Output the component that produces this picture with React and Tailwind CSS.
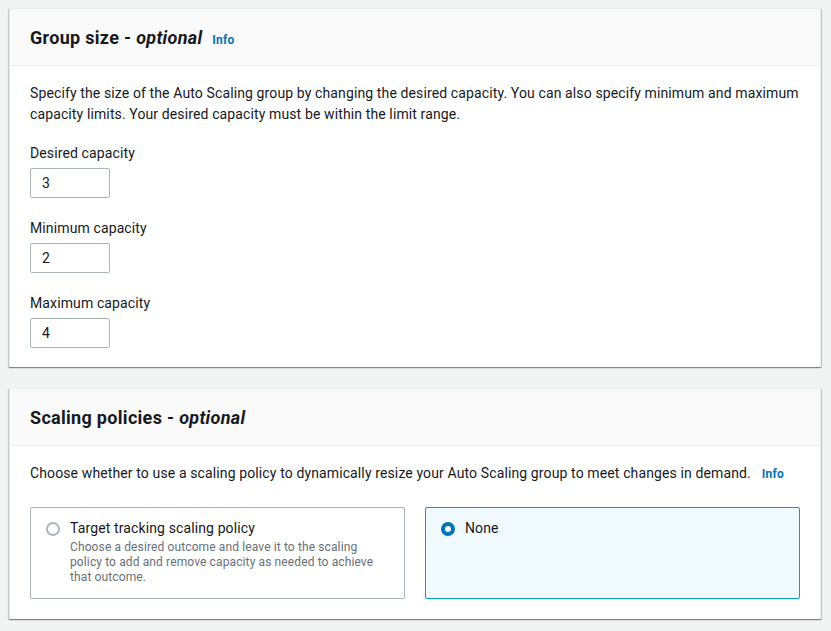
import React from 'react';

const font = { fontFamily: 'Roboto, "Liberation Sans", sans-serif' };

// Small blue "Info" link used next to headings
const Info = () => (
  <span className="text-[12px] font-bold text-[#0073bb] leading-none tracking-[0.2px]">Info</span>
);

const Card = ({ title, info, children }) => (
  <div className="bg-white border-t border-x border-[#eaeded] shadow-[0_1px_1px_0_rgba(0,28,36,0.3),1px_1px_1px_0_rgba(0,28,36,0.15),-1px_1px_1px_0_rgba(0,28,36,0.15)]">
    <div className="h-[57px] bg-[#fafafa] border-b border-[#eaeded] px-5 flex items-center gap-[10px]">
      <h2 className="text-[18px] font-bold text-[#16191f] leading-[22px] pt-[1px] tracking-[0.3px]">{title}</h2>
      {info && <span className="pt-[4px]"><Info /></span>}
    </div>
    {children}
  </div>
);

const Field = ({ label, value }) => (
  <div className="flex flex-col">
    <label className="text-[14px] leading-[22px] text-[#16191f]">{label}</label>
    <div className="mt-[4px] w-[80px] h-[30px] border border-[#aab7b8] rounded-[2px] flex items-center pl-[11px] text-[14px] text-[#16191f]">
      {value}
    </div>
  </div>
);

export default function App() {
  return (
    <div className="min-h-[631px] bg-[#f2f3f3] pt-[8px] pl-[9px] pr-[10px] pb-[12px] tracking-[0.12px]" style={font}>
      {/* Group size */}
      <Card title={<>Group size - <i>optional</i></>} info>
        <div className="px-5 pt-[17px] pb-[19px]">
          <p className="text-[14px] leading-[21px] text-[#16191f]">
            Specify the size of the Auto Scaling group by changing the desired capacity. You can also specify minimum and maximum capacity limits. Your desired capacity must be within the limit range.
          </p>
          <div className="mt-[17px] flex flex-col gap-[19px]">
            <Field label="Desired capacity" value="3" />
            <Field label="Minimum capacity" value="2" />
            <Field label="Maximum capacity" value="4" />
          </div>
        </div>
      </Card>

      <div className="h-[21px]" />

      {/* Scaling policies */}
      <Card title={<>Scaling policies - <i>optional</i></>}>
        <div className="px-5 pt-[16px] pb-5">
          <p className="text-[14px] leading-[22px] text-[#16191f]">
            Choose whether to use a scaling policy to dynamically resize your Auto Scaling group to meet changes in demand.
            <span className="ml-[11px]"><Info /></span>
          </p>
          <div className="mt-[23px] grid grid-cols-2 gap-5">
            <div className="h-[92px] border border-[#aab7b8] rounded-[2px] pt-[10px] px-[15px] flex gap-[10px]">
              <div className="mt-[4px] w-[14px] h-[14px] rounded-full border-2 border-[#aab7b8] shrink-0" />
              <div>
                <div className="text-[14px] leading-[20px] text-[#16191f]">Target tracking scaling policy</div>
                <div className="mt-[2px] text-[12px] leading-[15px] text-[#687078]">
                  Choose a desired outcome and leave it to the scaling<br />policy to add and remove capacity as needed to achieve<br />that outcome.
                </div>
              </div>
            </div>
            <div className="h-[92px] border border-[#00a1c9] bg-[#f1faff] rounded-[2px] pt-[10px] px-[15px] flex gap-[10px]">
              <div className="mt-[4px] w-[14px] h-[14px] rounded-full border-[4px] border-[#0073bb] bg-white shrink-0" />
              <div className="text-[14px] leading-[20px] text-[#16191f]">None</div>
            </div>
          </div>
        </div>
      </Card>
    </div>
  );
}
